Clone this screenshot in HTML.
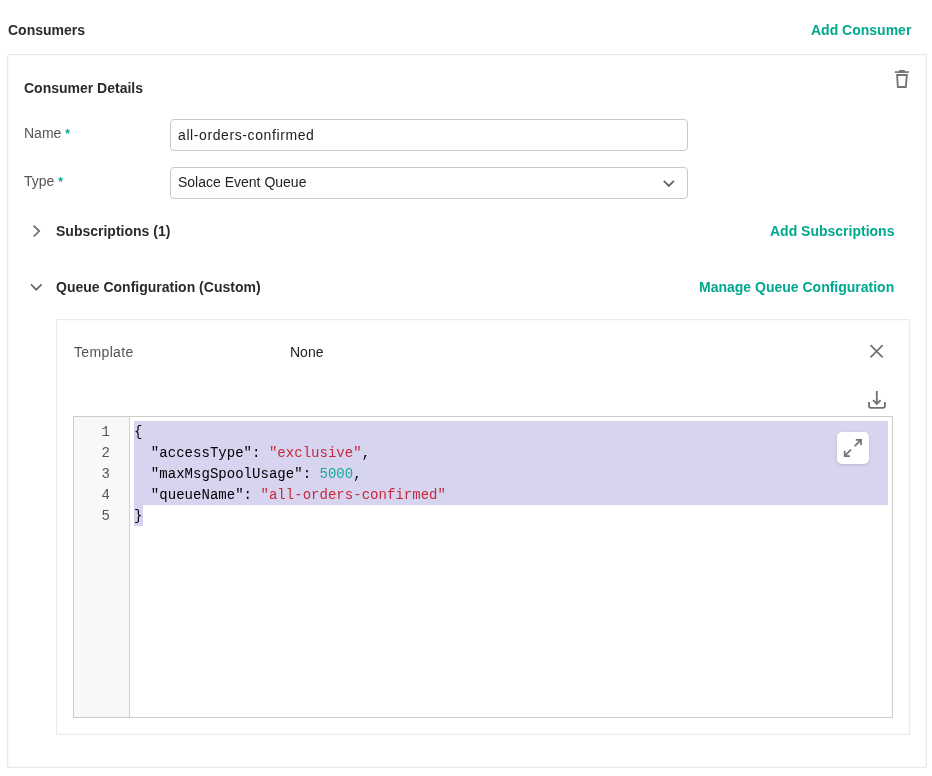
<!DOCTYPE html>
<html><head><meta charset="utf-8">
<style>
*{box-sizing:border-box;margin:0;padding:0}
html,body{width:932px;height:776px;background:#fff;overflow:hidden}
body{font-family:"Liberation Sans",sans-serif;font-size:14px;color:#222;position:relative}
.a{position:absolute;white-space:nowrap;line-height:16px;will-change:transform}
.b{font-weight:bold;color:#2a2a2a}
.g{font-weight:bold;color:#00a88e}
.lbl{color:#555}
.req{color:#00a88e;font-weight:bold;font-size:12px}
.card{position:absolute;left:7px;top:54px;width:920px;height:714px;border:1px solid #e8e8e8;border-radius:2px;box-shadow:inset 0 0 0 1px #fafafa}
.field{position:absolute;left:170px;width:518px;height:32px;border:1px solid #c8c8c8;border-radius:4px}
.inner{position:absolute;left:56px;top:319px;width:854px;height:416px;border:1px solid #eaeaea;box-shadow:inset 0 0 0 1px #fafafa}
.editor{position:absolute;left:73px;top:416px;width:820px;height:302px;border:1px solid #cdcdcd;background:#fff}
.gutter{position:absolute;left:0;top:0;width:56px;height:300px;background:#f8f8f8;border-right:1px solid #d2d2d2}
.sel{position:absolute;background:#d7d4f0}
.code{position:absolute;will-change:transform;font-family:"Liberation Mono",monospace;font-size:14px;line-height:21px;white-space:pre;color:#000;letter-spacing:0.03px}
.ln{position:absolute;will-change:transform;left:0;width:37px;text-align:right;font-family:"Liberation Mono",monospace;font-size:14px;line-height:21px;color:#555}
.s{color:#c8283a}
.n{color:#1ba799}
.expand{position:absolute;left:837px;top:432px;width:32px;height:32px;background:#fff;border-radius:5px;box-shadow:0 1px 3px rgba(0,0,0,.15)}
svg{position:absolute;overflow:visible}
</style></head><body>

<div class="a b" style="left:8px;top:22px">Consumers</div>
<div class="a g" style="left:811px;top:22px">Add Consumer</div>

<div class="card"></div>
<div class="a b" style="left:24px;top:80px">Consumer Details</div>

<!-- trash -->
<svg style="left:890px;top:66px" width="24" height="26" viewBox="0 0 24 26">
  <rect x="8.9" y="4" width="6" height="2.2" rx="0.8" fill="#747474"/>
  <rect x="4.9" y="5.2" width="13.9" height="1.75" fill="#747474"/>
  <path d="M7.1 9 L7.85 21 H15.85 L16.85 9 Z" stroke="#747474" stroke-width="1.85" fill="none"/>
</svg>

<div class="a lbl" style="left:24px;top:125px">Name <span class="req">*</span></div>
<div class="field" style="top:119px"></div>
<div class="a" style="left:178px;top:127px;color:#222;letter-spacing:0.6px">all-orders-confirmed</div>

<div class="a lbl" style="left:24px;top:173px">Type <span class="req">*</span></div>
<div class="field" style="top:167px"></div>
<div class="a" style="left:178px;top:174px;color:#222">Solace Event Queue</div>
<svg style="left:660px;top:176px" width="16" height="14" viewBox="0 0 16 14">
  <path d="M3.8 4.8 L8.85 9.85 L13.9 4.8" stroke="#666" stroke-width="1.9" fill="none"/>
</svg>

<!-- subscriptions -->
<svg style="left:26px;top:218px" width="22" height="26" viewBox="0 0 22 26">
  <path d="M7.6 7.7 L13.2 13.1 L7.6 18.5" stroke="#6a6a6a" stroke-width="1.7" fill="none"/>
</svg>
<div class="a b" style="left:56px;top:223px">Subscriptions (1)</div>
<div class="a g" style="left:770px;top:223px">Add Subscriptions</div>

<svg style="left:26px;top:278px" width="22" height="18" viewBox="0 0 22 18">
  <path d="M5 6.4 L10.3 11.7 L15.6 6.4" stroke="#6a6a6a" stroke-width="1.7" fill="none"/>
</svg>
<div class="a b" style="left:56px;top:279px">Queue Configuration (Custom)</div>
<div class="a g" style="left:699px;top:279px">Manage Queue Configuration</div>

<div class="inner"></div>
<div class="a lbl" style="left:74px;top:344px;letter-spacing:0.35px">Template</div>
<div class="a" style="left:290px;top:344px;color:#222">None</div>

<!-- close X -->
<svg style="left:864px;top:338px" width="26" height="26" viewBox="0 0 26 26">
  <path d="M7 7.7 L18.2 18.9 M18.2 7.7 L7 18.9" stroke="#727272" stroke-width="1.75" stroke-linecap="round" fill="none"/>
</svg>
<!-- download -->
<svg style="left:863px;top:386px" width="28" height="26" viewBox="0 0 28 26">
  <path d="M13.8 5 V18" stroke="#727272" stroke-width="1.85" fill="none"/>
  <path d="M10 14.2 L13.8 18 L17.6 14.2" stroke="#727272" stroke-width="1.85" fill="none"/>
  <path d="M6 16.1 V20 Q6 21.85 8 21.85 H20 Q21.9 21.85 21.9 20 V16.1" stroke="#727272" stroke-width="1.85" fill="none"/>
</svg>

<div class="editor">
  <div class="gutter"></div>
</div>
<div class="sel" style="left:134px;top:421px;width:754px;height:84px"></div>
<div class="sel" style="left:134px;top:505px;width:9px;height:21px"></div>
<div class="ln" style="left:73px;top:422px">1<br>2<br>3<br>4<br>5</div>
<div class="code" style="left:134px;top:422px">{
  "accessType": <span class="s">"exclusive"</span>,
  "maxMsgSpoolUsage": <span class="n">5000</span>,
  "queueName": <span class="s">"all-orders-confirmed"</span>
}</div>

<div class="expand"></div>
<svg style="left:832px;top:427px" width="42" height="42" viewBox="0 0 42 42">
  <path d="M23.8 12.8 H29 V17.9 M29 12.8 L22.7 19.1" stroke="#727272" stroke-width="1.75" fill="none"/>
  <path d="M12.7 24.1 V29 H17.9 M12.7 29 L19 22.7" stroke="#727272" stroke-width="1.75" fill="none"/>
</svg>

</body></html>
